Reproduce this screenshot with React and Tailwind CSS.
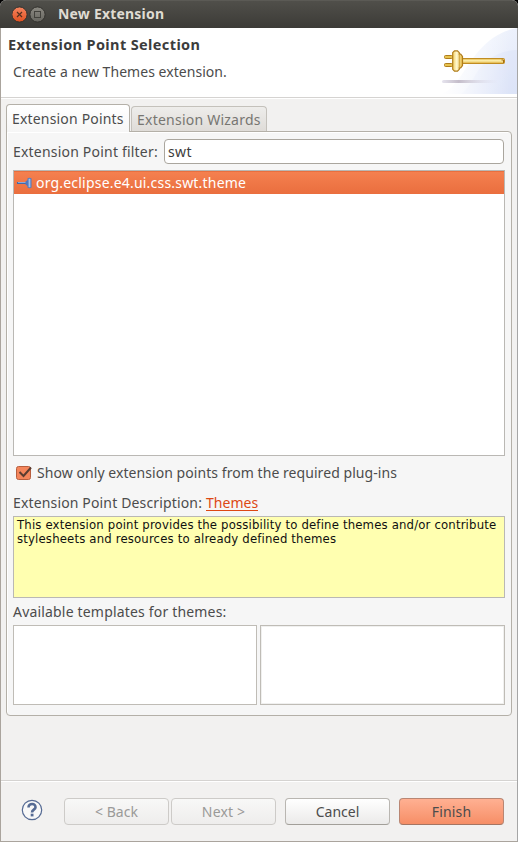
const base = "whitespace-nowrap leading-5";

function Plug() {
  return (
    <svg width="76" height="66" viewBox="0 0 76 66" className="block">
      <defs>
        <linearGradient id="bg" x1="0" x2="1" y1="0" y2="1">
          <stop offset="0" stopColor="#f8faff" />
          <stop offset="1" stopColor="#e0e7f8" />
        </linearGradient>
        <linearGradient id="fade" x1="0" x2="1">
          <stop offset="0" stopColor="#fff" />
          <stop offset="0.9" stopColor="#fff" stopOpacity="0" />
        </linearGradient>
        <linearGradient id="gold" x1="0" x2="0" y1="0" y2="1">
          <stop offset="0" stopColor="#e3b23c" />
          <stop offset="0.45" stopColor="#fdf3b4" />
          <stop offset="1" stopColor="#dca62c" />
        </linearGradient>
        <linearGradient id="head" x1="0" x2="1">
          <stop offset="0" stopColor="#f2cf62" />
          <stop offset="0.4" stopColor="#fff8cf" />
          <stop offset="1" stopColor="#e5b840" />
        </linearGradient>
        <linearGradient id="shadow">
          <stop offset="0" stopColor="#e6e4ee" />
          <stop offset="0.3" stopColor="#c4bdca" />
          <stop offset="1" stopColor="#d9d7e8" stopOpacity="0" />
        </linearGradient>
      </defs>
      <path d="M0 66C14 62 22 42 36 25C49 10 60 3 76 0V66Z" fill="url(#bg)" />
      <path d="M20 66C30 60 34 42 47 32C56 25 66 22 76 22V66Z" fill="#d3def5" fillOpacity=".35" />
      <rect width="76" height="66" fill="url(#fade)" />
      <rect x="1" y="52" width="56" height="3" rx="1.5" fill="url(#shadow)" />
      <rect x="3.5" y="27.5" width="8" height="3" rx="1" fill="#e7c34f" stroke="#b07d1c" />
      <rect x="3.5" y="35.5" width="8" height="3" rx="1" fill="#e7c34f" stroke="#b07d1c" />
      <rect x="20" y="30.500" width="43.5" height="5" rx="1" fill="url(#gold)" stroke="#c08c22" />
      <path d="M11.700 24.700L13.500 22.800H16.500L18.300 24.700V26.200H19.700L21.500 28.500V37.500L19.700 39.800H18.300V41.300L16.500 43.200H13.500L11.700 41.300Z" fill="url(#head)" stroke="#b07d1c" strokeWidth="1.200" />
      <path d="M18.300 26V40" stroke="#cda03a" />
      <path d="M60.500 32h2v3" stroke="#a56f14" fill="none" />
    </svg>
  );
}

function Button({ label, tone, text }) {
  return (
    <button className={`h-[27px] w-[105px] shrink-0 rounded-[4px] border ${tone}`}>
      <span className={`${base} block ${text}`}>{label}</span>
    </button>
  );
}

export default function App() {
  return (
    <div className="h-[842px] w-[518px] bg-black font-['Noto_Sans','Open_Sans',sans-serif] text-[14px] text-[#4c4c4c]">
      <div className="flex h-full w-full flex-col overflow-hidden rounded-t-[6px] bg-[#f2f1f0]">
        <header className="flex h-7 shrink-0 items-center border-t border-[#5b5a55] bg-linear-to-b from-[#504f4a] to-[#3c3b37] pl-3">
          <svg width="34" height="18" viewBox="0 0 34 18">
            <defs>
              <linearGradient id="close" x1="0" x2="0" y1="0" y2="1">
                <stop offset="0" stopColor="#f58560" />
                <stop offset="1" stopColor="#e05020" />
              </linearGradient>
              <linearGradient id="max" x1="0" x2="0" y1="0" y2="1">
                <stop offset="0" stopColor="#8b8982" />
                <stop offset="1" stopColor="#66655f" />
              </linearGradient>
            </defs>
            <circle cx="7.5" cy="8.500" r="7.600" fill="url(#close)" stroke="#34332f" />
            <path d="M5 6l5 5M10 6l-5 5" stroke="#54301f" strokeWidth="1.2" />
            <circle cx="25.5" cy="8.500" r="7.600" fill="url(#max)" stroke="#34332f" />
            <rect x="22.5" y="5.5" width="6" height="6" fill="none" stroke="#42413c" />
          </svg>
          <h1 className={`${base} mb-[2px] ml-3 text-[14px] font-bold tracking-[0.2px] text-[#dfdbd2]`}>New Extension</h1>
        </header>

        <div className="flex grow flex-col border-x border-b border-[#aaa49d] border-r-[#a6a6a6]">
          <section className="flex h-[69px] shrink-0 justify-between bg-white">
            <div className="pl-[7px] pt-[6px]">
              <h2 className={`${base} text-[14.5px] font-bold tracking-[0.38px] text-[#3c3c3c]`}>Extension Point Selection</h2>
              <p className={`${base} mt-[8px] pl-[5px] tracking-[0.04px]`}>Create a new Themes extension.</p>
            </div>
            <Plug />
          </section>
          <div className="h-[2px] shrink-0 border-t border-[#d5d3d1] bg-white" />

          <div className="mt-[4px] flex h-[28px] shrink-0 items-end pl-[5px]">
            <div className="relative z-10 -mb-px h-[28px] w-[124px] shrink-0 rounded-t-[4px] border border-b-0 border-[#b4b0a8] bg-linear-to-b from-white to-[#f6f6f6] pl-[5px] pt-[4px]">
              <span className={`${base} block tracking-[0.18px]`}>Extension Points</span>
            </div>
            <div className="ml-px h-[25px] w-[136px] rounded-t-[4px] border border-b-0 border-[#c4c1bb] bg-linear-to-b from-[#eeedeb] to-[#dfdcd8] pl-[5px] pt-[3px] text-[#777672]">
              <span className={`${base} block tracking-[0.23px]`}>Extension Wizards</span>
            </div>
          </div>

          <main className="ml-[5px] flex h-[585px] w-[506px] shrink-0 flex-col rounded-[4px] rounded-tl-none border border-[#b4b0a8] bg-[#f6f6f6] px-[6px] pt-[7px] shadow-[inset_1px_1px_0_#fff]">
            <div className="flex h-[25px] shrink-0 items-center">
              <label className={`${base} w-[151px] shrink-0 tracking-[0.2px]`}>Extension Point filter:</label>
              <div className="mr-px flex h-[25px] grow items-center rounded-[4px] border border-[#aaa69e] bg-white pl-[3px] text-[#3c3c3c]">
                <span className={`${base} tracking-[0.4px]`}>swt</span>
              </div>
            </div>
            <div className="mt-[6px] h-[286px] w-[492px] shrink-0 border border-[#bab8b4] bg-white">
              <div className="flex h-[23px] items-center border-t border-[#e96f3e] bg-linear-to-b from-[#f5804f] to-[#ea6e3e] pl-[3px] text-white">
                <svg width="15" height="12" viewBox="0 0 15 12">
                  <path d="M0 6h10" stroke="#4468a8" strokeWidth="2" />
                  <path d="M1 5.500h9" stroke="#8aa9d8" strokeWidth="1" />
                  <path d="M8.500 4.500L10.500 3V1.500Q12.500 .2 14.500 1.500V10.500Q12.500 11.800 10.500 10.500V9L8.500 7.500Z" fill="#4f78bd" />
                  <path d="M12.500 1.800v8.400" stroke="#a3c0ea" strokeWidth="1.800" />
                </svg>
                <span className={`${base} ml-[4px] tracking-[0.2px]`}>org.eclipse.e4.ui.css.swt.theme</span>
              </div>
            </div>
            <div className="mt-[7px] flex h-5 shrink-0 items-center pl-[3px]">
              <svg width="17" height="16" viewBox="0 0 17 16">
                <rect x=".5" y="1.500" width="14" height="13" rx="2" fill="#f4855b" stroke="#b75e3e" />
                <path d="M3.500 7l4 4L15 2.500" fill="none" stroke="#5a3c30" strokeWidth="2" />
              </svg>
              <span className={`${base} ml-[4px] tracking-[0.06px]`}>Show only extension points from the required plug-ins</span>
            </div>
            <div className="mt-[10px] flex h-5 shrink-0 gap-[4px]">
              <span className={`${base} tracking-[0.15px]`}>Extension Point Description:</span>
              <a className={`${base} h-[18px] border-b border-[#dd4814] text-[#dd4814]`}>Themes</a>
            </div>
            <div className="mt-[3px] h-[82px] w-[492px] shrink-0 border border-[#bab8b4] bg-[#ffffb0] pl-[3px] pt-px font-['DejaVu_Sans_Condensed','DejaVu_Sans',sans-serif] text-[13px] leading-[14px] tracking-[0.165px] text-[#101010]">
              <p className="whitespace-nowrap">This extension point provides the possibility to define themes and/or contribute</p>
              <p className="whitespace-nowrap">stylesheets and resources to already defined themes</p>
            </div>
            <div className={`${base} mt-[4px] tracking-[0.18px]`}>Available templates for themes:</div>
            <div className="mt-[3px] flex gap-[3px]">
              <div className="h-[80px] w-[244px] border border-[#bfbcb6] bg-white" />
              <div className="h-[80px] w-[245px] border border-[#bfbcb6] bg-white shadow-[inset_0_0_0_1px_#f0f0ef]" />
            </div>
          </main>

          <div className="mt-[64px] h-[2px] shrink-0 border-t border-[#d5d3d1] bg-white" />
          <footer className="flex pl-[20px] pt-[16px]">
            <svg width="22" height="22" viewBox="0 0 22 22" className="mt-px mr-[21px]">
              <circle cx="11" cy="11" r="9.700" fill="#f8f8f8" stroke="#566b94" strokeWidth="1.200" />
              <path d="M7.500 8.500c0-5 7.500-4.500 7 0c-.3 2.300-3.500 2.200-3.500 5" fill="none" stroke="#566b94" strokeWidth="2.600" />
              <rect x="9.700" y="14.700" width="2.800" height="2.700" fill="#566b94" />
            </svg>
            <Button label="< Back" tone="mr-[2px] border-[#cdcbc8] bg-linear-to-b from-[#f8f8f7] to-[#eeedec]" text="text-[#9a9a98]" />
            <Button label="Next >" tone="mr-[9px] border-[#cdcbc8] bg-linear-to-b from-[#f8f8f7] to-[#eeedec]" text="tracking-[0.15px] text-[#9a9a98]" />
            <Button label="Cancel" tone="mr-[9px] border-[#b9b6b1] border-b-[#a29f99] bg-linear-to-b from-white to-[#ebeae9]" text="text-[#4c4c4c]" />
            <Button label="Finish" tone="border-[#b98673] border-b-[#a57562] bg-linear-to-b from-[#ffb092] to-[#f68e66]" text="tracking-[0.15px] text-[#4c4c4c]" />
          </footer>
        </div>
      </div>
    </div>
  );
}
